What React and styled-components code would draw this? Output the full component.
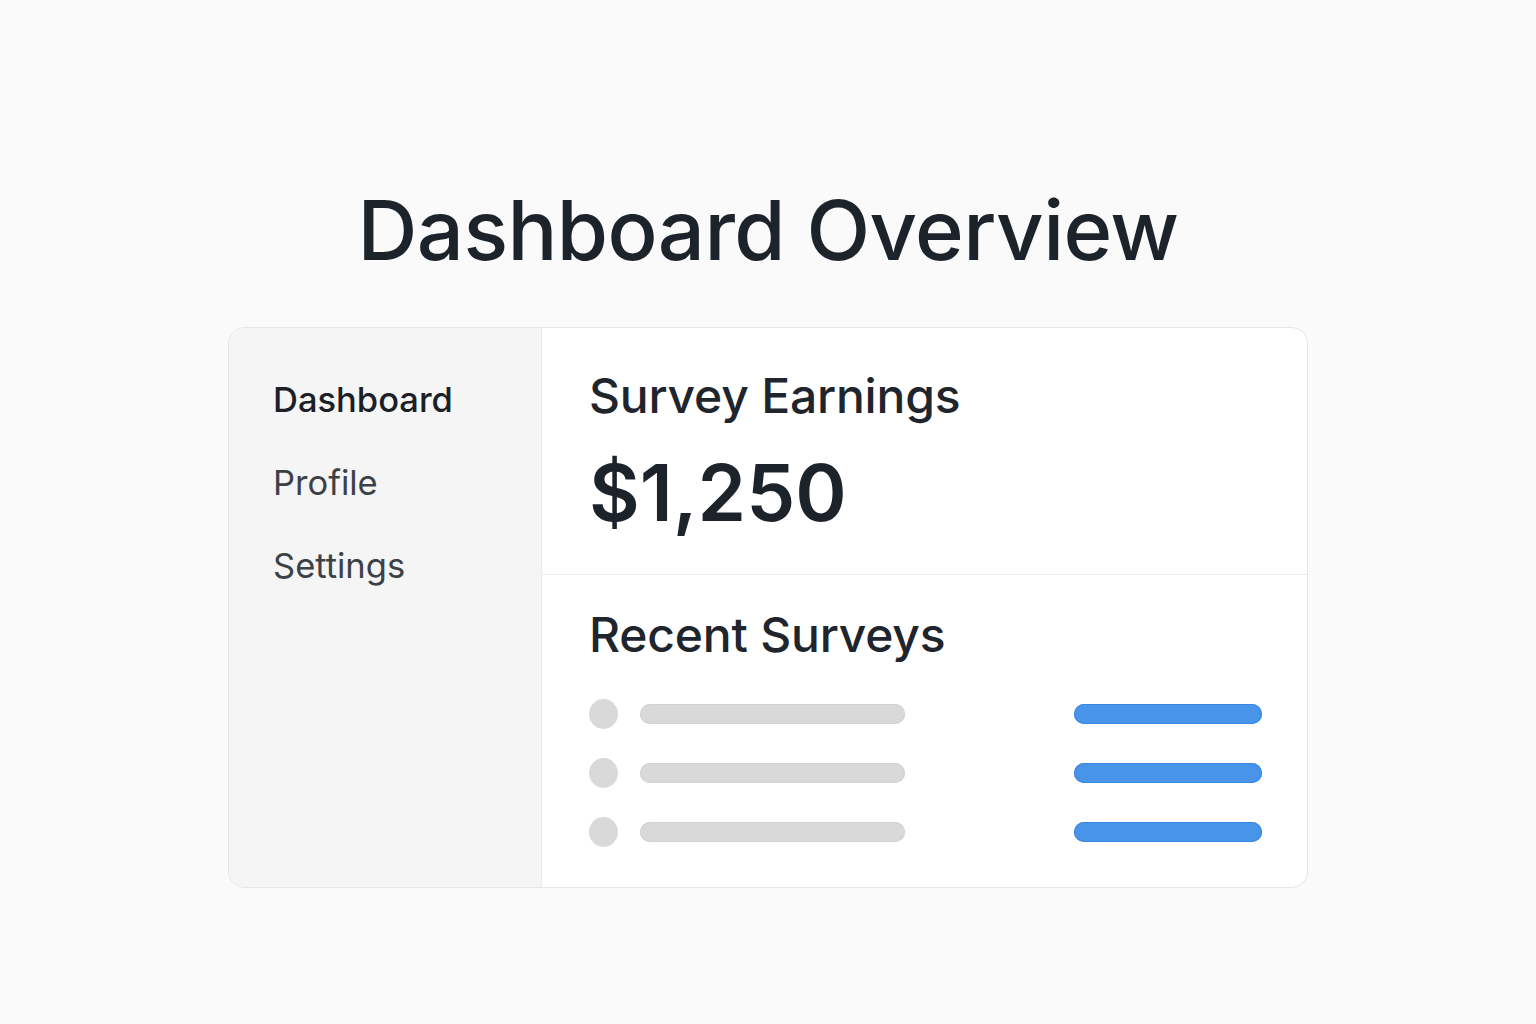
import React from 'react';
import styled, { createGlobalStyle } from 'styled-components';

const GlobalStyle = createGlobalStyle`
    html, body {
        margin: 0;
        padding: 0;
        background: #fafafa;
    }
    body {
        font-family: Inter, "Noto Sans", sans-serif;
        color: #1f252c;
    }
`;

const Page = styled.div`
    width: 1536px;
    height: 1024px;
    display: flex;
    flex-direction: column;
    align-items: center;
    box-sizing: border-box;
    padding-top: 180px;
`;

const Title = styled.h1`
    margin: 0;
    font-size: 83px;
    font-weight: 500;
    letter-spacing: -0.6px;
    line-height: 100px;
    color: #1d232a;
`;

const Card = styled.div`
    margin-top: 47px;
    width: 1080px;
    height: 561px;
    box-sizing: border-box;
    display: flex;
    background: #fff;
    border: 1px solid #e6e6e6;
    border-radius: 16px;
    overflow: hidden;
`;

const Sidebar = styled.nav`
    width: 313px;
    flex-shrink: 0;
    background: #f5f5f5;
    border-right: 1px solid #ececec;
    padding: 50px 0 0 44px;
    box-sizing: border-box;
    display: flex;
    flex-direction: column;
    gap: 39px;
`;

const NavItem = styled.div`
    font-size: 34.5px;
    line-height: 44px;
    font-weight: ${p => (p.active ? 500 : 400)};
    color: ${p => (p.active ? '#1b2026' : '#3c4147')};
`;

const Main = styled.div`
    flex: 1;
    display: flex;
    flex-direction: column;
`;

const Section = styled.section`
    padding: ${p => p.pad};
    border-bottom: ${p => (p.divided ? '1px solid #ececec' : 'none')};
`;

const Heading = styled.h2`
    margin: 0;
    font-size: 48px;
    font-weight: 500;
    letter-spacing: -0.2px;
    line-height: 60px;
    color: #1f252c;
`;

const Amount = styled.div`
    margin-top: 22px;
    font-size: 78px;
    font-weight: 600;
    line-height: 90px;
    color: #1d232a;
`;

const List = styled.div`
    margin-top: 39px;
    display: flex;
    flex-direction: column;
    gap: 39px;
`;

const Row = styled.div`
    display: flex;
    align-items: center;
    height: 20px;
    padding-right: 45px;
`;

const Dot = styled.span`
    width: 29px;
    height: 30px;
    border-radius: 50%;
    background: #d9d9d9;
    flex-shrink: 0;
`;

const Bar = styled.span`
    height: 20px;
    width: ${p => p.w}px;
    border-radius: 10px;
    background: ${p => (p.blue ? '#4794e8' : '#d9d9d9')};
    box-shadow: inset 0 0 0 1px ${p => (p.blue ? '#3a86e2' : '#d2d2d2')};
    margin-left: ${p => (p.push ? 'auto' : '22px')};
`;

const surveys = [1, 2, 3];

export default function App() {
    return (
        <>
            <GlobalStyle />
            <Page>
                <Title>Dashboard Overview</Title>
                <Card>
                    <Sidebar>
                        <NavItem active>Dashboard</NavItem>
                        <NavItem>Profile</NavItem>
                        <NavItem>Settings</NavItem>
                    </Sidebar>
                    <Main>
                        <Section pad="38px 0 36px 47px" divided>
                            <Heading>Survey Earnings</Heading>
                            <Amount>$1,250</Amount>
                        </Section>
                        <Section pad="30px 0 0 47px">
                            <Heading>Recent Surveys</Heading>
                            <List>
                                {surveys.map(id => (
                                    <Row key={id}>
                                        <Dot />
                                        <Bar w={265} />
                                        <Bar w={188} blue push />
                                    </Row>
                                ))}
                            </List>
                        </Section>
                    </Main>
                </Card>
            </Page>
        </>
    );
}
